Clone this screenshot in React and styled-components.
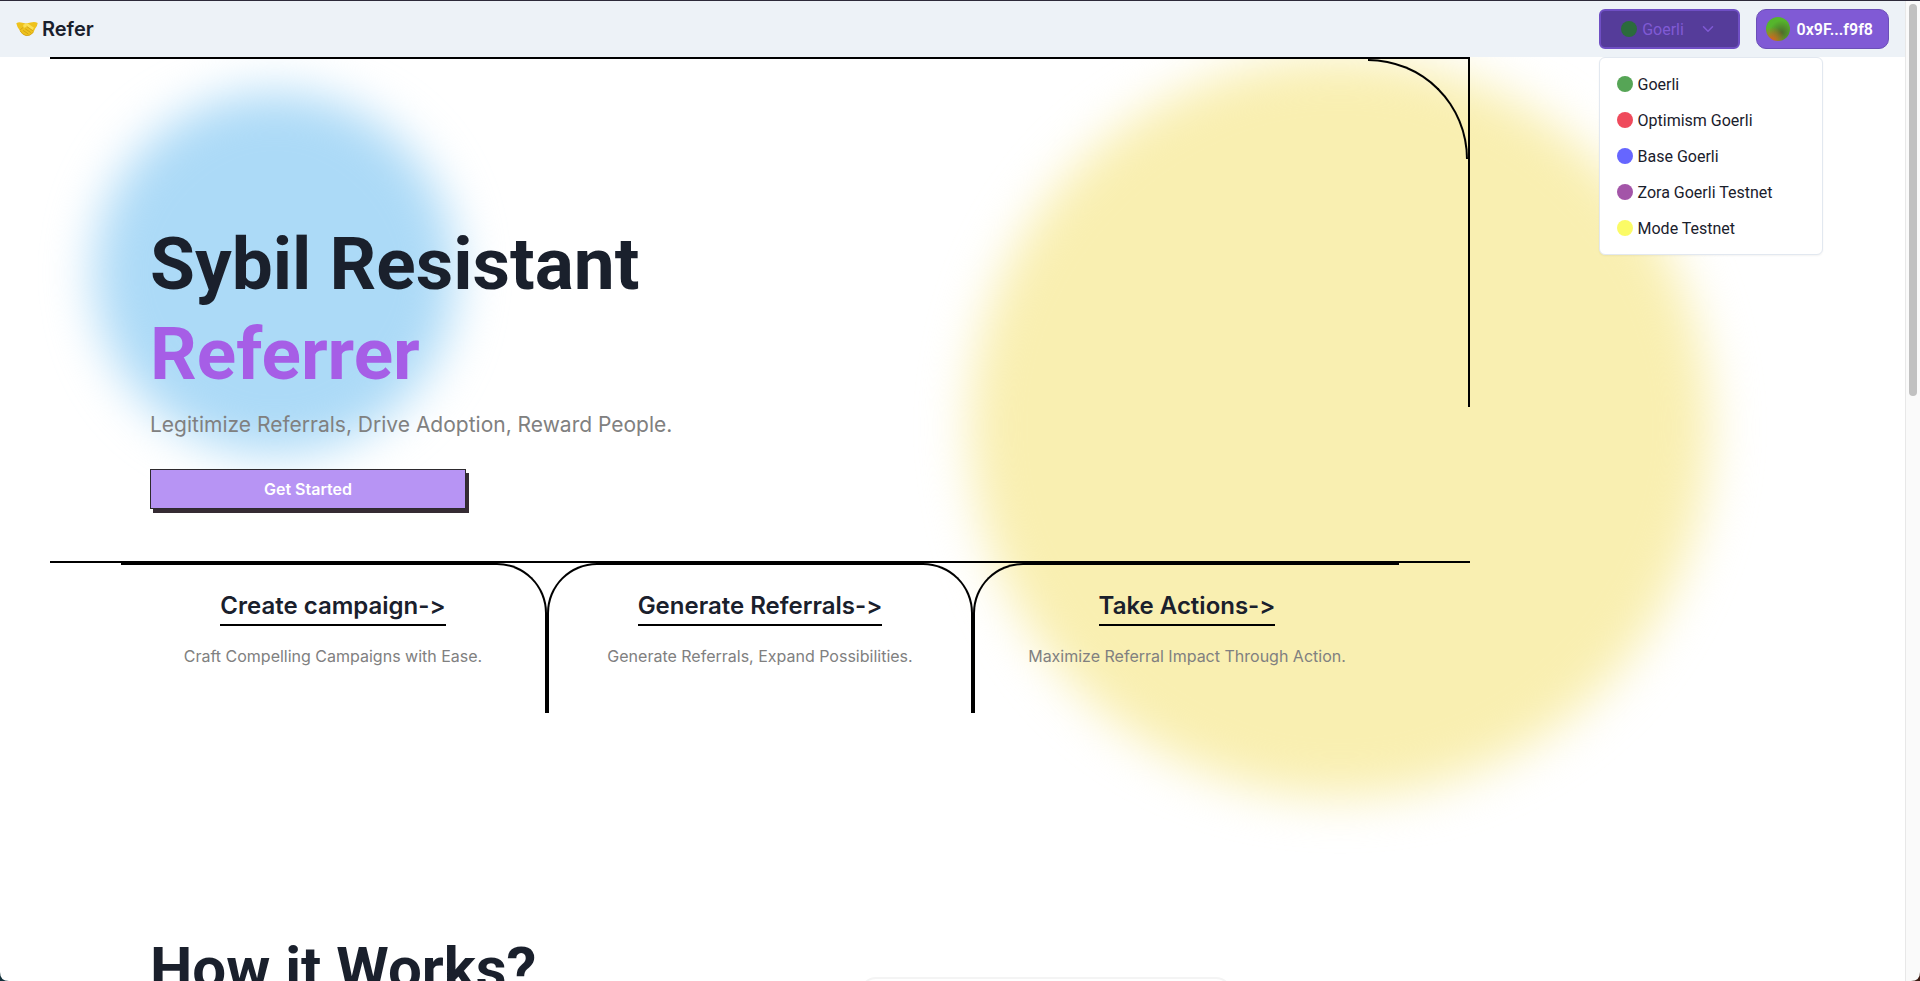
import { useState } from 'react';
import styled, { createGlobalStyle } from 'styled-components';
import { FiChevronDown } from 'react-icons/fi';

const GlobalStyle = createGlobalStyle`
    * {
        box-sizing: border-box;
    }
    body {
        margin: 0;
        background: #fff;
        color: #1a202c;
        font-family: Inter, "Liberation Sans", sans-serif;
        font-size: 16px;
        line-height: 24px;
    }
    h1, h2, h3, p, ul {
        margin: 0;
        padding: 0;
    }
    button {
        font-family: inherit;
        font-size: inherit;
        cursor: pointer;
    }
`

const Window = styled.div`
    display: grid;
    grid-template-columns: minmax(0, 1fr) 15px;
    height: 100vh;
    overflow: hidden;
    position: relative;
    border-top: 1px solid #2d2a3a;
`

const Corner = styled.svg`
    position: absolute;
    bottom: 0;
    width: 9px;
    height: 9px;
    left: ${props => props.$side === 'left' ? '0' : 'auto'};
    right: ${props => props.$side === 'right' ? '0' : 'auto'};
    z-index: 20;
`

const Page = styled.div`
    position: relative;
    overflow: hidden;
`

const ScrollTrack = styled.div`
    padding: 3px;
    background: #fafafa;
    border-left: 1px solid #e8e8e8;
`

const ScrollThumb = styled.div`
    width: 8px;
    height: 40vh;
    border-radius: 4px;
    background: #c1c1c1;
`

const Header = styled.header`
    position: relative;
    z-index: 5;
    display: flex;
    align-items: center;
    justify-content: space-between;
    height: 56px;
    padding: 0 16px;
    background: #edf2f7;
`

const Brand = styled.a`
    display: flex;
    align-items: center;
    gap: 4px;
    color: inherit;
    font-size: 20px;
    font-weight: 600;
    text-decoration: none;
`

const Actions = styled.div`
    display: flex;
    gap: 16px;
    font-family: Roboto, "Liberation Sans", sans-serif;
    font-size: 16px;
`

const Network = styled.div`
    position: relative;
`

const NetworkButton = styled.button`
    display: flex;
    align-items: center;
    justify-content: center;
    gap: 5px;
    width: 141px;
    height: 40px;
    border: 2px solid #6f4fc4;
    border-radius: 6px;
    background: #553c9a;
    color: #805ad5;

    svg {
        margin-left: 10px;
    }
`

const Dot = styled.span`
    flex: none;
    width: 16px;
    height: 16px;
    border-radius: 50%;
    background: ${props => props.$color};
`

const Menu = styled.ul`
    position: absolute;
    top: 48px;
    left: 0;
    width: 224px;
    padding: 8px 0;
    border: 1px solid #e2e8f0;
    border-radius: 6px;
    background: #fff;
    box-shadow: 0 1px 2px rgba(0, 0, 0, 0.05);
    list-style: none;
`

const MenuItem = styled.button`
    display: flex;
    align-items: center;
    gap: 5px;
    width: 100%;
    height: 36px;
    padding: 0 17px;
    border: 0;
    background: transparent;
    color: inherit;

    &:hover{
        background: #edf2f7;
    }
`

const Account = styled.button`
    display: flex;
    align-items: center;
    gap: 7px;
    height: 40px;
    padding: 0 15px 0 9px;
    border: 1px solid #6b4fb8;
    border-radius: 10px;
    background: #805ad5;
    color: #fff;
    font-weight: 600;
`

const Avatar = styled.span`
    width: 24px;
    height: 24px;
    border-radius: 50%;
    background:
        radial-gradient(circle at 25% 95%, #d9601e 0, transparent 45%),
        radial-gradient(circle at 65% 65%, #4d6a2c 0, transparent 55%),
        #55b52c;
`

const Blob = styled.div`
    position: absolute;
    top: ${props => props.$top}px;
    left: ${props => props.$left}px;
    width: ${props => props.$size}px;
    height: ${props => props.$size}px;
    border-radius: 50%;
    background: ${props => props.$color};
    filter: blur(24px);
`

const Hero = styled.section`
    position: relative;
    max-width: 1420px;
    height: 506px;
    margin-left: 50px;
    padding: 160px 100px 0;
    border-top: 2px solid #000;
    border-bottom: 2px solid #000;

    &::after{
        content: '';
        position: absolute;
        top: 0;
        right: 0;
        width: 2px;
        height: 348px;
        background: #000;
    }
`

const Arc = styled.div`
    position: absolute;
    top: 0;
    right: 2px;
    width: 100px;
    height: 100px;
    border: solid #000;
    border-width: 2px 2px 0 0;
    border-top-right-radius: 100%;
`

const Title = styled.h1`
    font-family: Roboto, "Liberation Sans", sans-serif;
    font-size: 73px;
    font-weight: 700;
    line-height: 90px;

    span {
        display: block;
        color: #a65ee6;
    }
`

const Tagline = styled.p`
    margin-top: 10px;
    color: #808080;
    font-size: 21px;
    line-height: 32px;
`

const StartButton = styled.button`
    width: 316px;
    height: 40px;
    margin-top: 28px;
    border: 1px solid #2d2a2e;
    background: #b794f4;
    box-shadow: 3px 4px 0 #352b33;
    color: #fff;
    font-weight: 600;
`

const Features = styled.section`
    position: relative;
    display: grid;
    grid-template-columns: repeat(3, 1fr);
    max-width: 1278px;
    margin-left: 121px;
`

const Feature = styled.article`
    display: flex;
    flex-direction: column;
    align-items: center;
    height: 150px;
    padding-top: 24px;
    border-top: 2px solid #000;

    &:not(:last-child){
        border-right: 2px solid #000;
        border-top-right-radius: 50px;
    }

    &:not(:first-child){
        border-left: 2px solid #000;
        border-top-left-radius: 50px;
    }
`

const FeatureLink = styled.a`
    padding-bottom: 2px;
    border-bottom: 2px solid #000;
    color: inherit;
    font-size: 24px;
    font-weight: 600;
    font-feature-settings: "calt" 0;
    line-height: 33px;
    text-decoration: none;
`

const FeatureText = styled.p`
    margin-top: 18px;
    color: #808080;
    font-size: 16px;
`

const Works = styled.section`
    position: relative;
    display: grid;
    grid-template-columns: 1fr 1fr;
    align-items: start;
    max-width: 1570px;
    padding: 220px 0 0 150px;
`

const WorksTitle = styled.h2`
    font-family: Roboto, "Liberation Sans", sans-serif;
    font-size: 60px;
    font-weight: 700;
    line-height: 72px;
`

const WorksCard = styled.div`
    width: 372px;
    height: 300px;
    margin-top: 44px;
    border: 2px solid #f4f4f4;
    border-radius: 16px;
`

const networks = [
    { id: 1, name: 'Goerli', color: '#56a556' },
    { id: 2, name: 'Optimism Goerli', color: '#ef4a5c' },
    { id: 3, name: 'Base Goerli', color: '#6666ff' },
    { id: 4, name: 'Zora Goerli Testnet', color: '#a355a8' },
    { id: 5, name: 'Mode Testnet', color: '#fbfb66' },
]

const features = [
    { id: 1, title: 'Create campaign->', text: 'Craft Compelling Campaigns with Ease.' },
    { id: 2, title: 'Generate Referrals->', text: 'Generate Referrals, Expand Possibilities.' },
    { id: 3, title: 'Take Actions->', text: 'Maximize Referral Impact Through Action.' },
]

const Handshake = () => (
    <svg width="22" height="22" viewBox="0 0 22 22" aria-hidden="true">
        <path d="M0.3 5.2 Q3 3.6 6.4 4.8 L10 5.4 L14.6 4.6 Q18.6 3.2 21.7 5 Q21.4 8.2 19.2 10.4 L17.6 14 Q14 18.4 10 17.6 Q6.4 16.8 4 12.8 Q1 9.2 0.3 5.2Z" fill="#eec21c" />
        <path d="M7.5 6.4 L11.5 5.2 L18 9.8 L16.4 12 L11 8.6 L8.4 9.8 Q6.4 9.2 7.5 6.4Z" fill="#fbdf55" />
        <path d="M11 8.6 L16.5 12.5 M9.5 11 L14.6 14.4 M7.4 12.6 L12 15.8 M4.5 11.6 L7 9.5" fill="none" stroke="#c79612" strokeWidth="0.7" strokeLinecap="round" />
        <path d="M4 12.8 Q6.4 16.8 10 17.6 Q14 18.4 17.6 14" fill="none" stroke="#cf9c10" strokeWidth="0.8" />
    </svg>
)

export default function App() {
    const [open, setOpen] = useState(true);
    const [network, setNetwork] = useState(networks[0]);

    const handleSelect = (item) => {
        setNetwork(item);
        setOpen(false);
    }

    return (
        <>
            <GlobalStyle />
            <Window>
                <Page>
                    <Blob $top={91} $left={94} $size={362} $color="#acdaf7" />
                    <Blob $top={56} $left={970} $size={740} $color="#f9efb1" />
                    <Header>
                        <Brand href="#"><Handshake />Refer</Brand>
                        <Actions>
                            <Network>
                                <NetworkButton aria-expanded={open} onClick={() => setOpen(!open)}>
                                    <Dot $color="#2b6b3c" />
                                    {network.name}
                                    <FiChevronDown size={18} />
                                </NetworkButton>
                                {open && (
                                    <Menu>
                                        {networks.map(item => (
                                            <li key={item.id}>
                                                <MenuItem onClick={() => handleSelect(item)}>
                                                    <Dot $color={item.color} />
                                                    {item.name}
                                                </MenuItem>
                                            </li>
                                        ))}
                                    </Menu>
                                )}
                            </Network>
                            <Account><Avatar />0x9F...f9f8</Account>
                        </Actions>
                    </Header>
                    <Hero>
                        <Arc />
                        <Title>Sybil Resistant <span>Referrer</span></Title>
                        <Tagline>Legitimize Referrals, Drive Adoption, Reward People.</Tagline>
                        <StartButton>Get Started</StartButton>
                    </Hero>
                    <Features>
                        {features.map(item => (
                            <Feature key={item.id}>
                                <FeatureLink href="#">{item.title}</FeatureLink>
                                <FeatureText>{item.text}</FeatureText>
                            </Feature>
                        ))}
                    </Features>
                    <Works>
                        <WorksTitle>How it Works?</WorksTitle>
                        <WorksCard />
                    </Works>
                </Page>
                <ScrollTrack>
                    <ScrollThumb />
                </ScrollTrack>
                <Corner $side="left" viewBox="0 0 9 9"><path d="M0 0 Q0 9 9 9 H0Z" fill="#12303a" /></Corner>
                <Corner $side="right" viewBox="0 0 9 9"><path d="M9 0 Q9 9 0 9 H9Z" fill="#3a1a12" /></Corner>
            </Window>
        </>
    );
}
